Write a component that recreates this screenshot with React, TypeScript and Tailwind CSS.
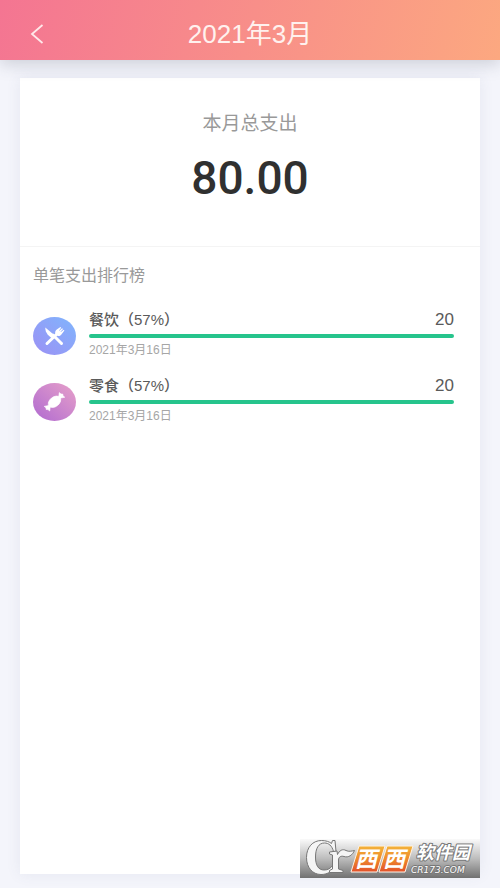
import React from 'react';

interface Expense {
  name: string;
  percent: number;
  date: string;
  amount: number;
  kind: 'food' | 'snack';
}

const EXPENSES: Expense[] = [
  { name: '餐饮', percent: 57, date: '2021年3月16日', amount: 20, kind: 'food' },
  { name: '零食', percent: 57, date: '2021年3月16日', amount: 20, kind: 'snack' },
];

const FoodIcon: React.FC = () => (
  <svg viewBox="0 0 43 38" className="h-full w-full" aria-hidden="true">
    <g stroke="#fff" strokeLinecap="round" fill="none">
      <path d="M20 18 L28.5 26.5" strokeWidth="3" />
      <path d="M14 26.5 L24.5 16.5" strokeWidth="3" />
    </g>
    {/* knife blade */}
    <path d="M12.3 10.5 L23 19.6 L20.6 22 C16 20 12 15.5 12.3 10.5 Z" fill="#fff" />
    {/* fork head */}
    <path
      d="M22.3 16.8 C21.8 14.5 22.6 13.2 23.8 12.4 L27.4 10 L28.2 10.8 L26 13.4 L26.4 13.8 L29.1 11.2 L30 12 L27.5 14.7 L27.9 15.1 L30.8 12.8 L31.4 13.6 L28.4 17.4 C27 18.9 25.6 19.5 24 18.6 Z"
      fill="#fff"
    />
  </svg>
);

const SnackIcon: React.FC = () => (
  <svg viewBox="0 0 43 38" className="h-full w-full" aria-hidden="true">
    <g fill="#fff" stroke="#fff" strokeWidth="0.6" strokeLinejoin="round">
      <ellipse cx="21.5" cy="18.8" rx="7" ry="4.8" transform="rotate(-38 21.5 18.8)" />
      <path d="M25.5 15.6 L26.3 9.6 L28 11 L29.8 11.1 L30 12.8 L31.8 14.2 Z" />
      <path d="M17.5 22 L16.7 28 L15 26.6 L13.2 26.5 L13 24.8 L11.2 23.4 Z" />
    </g>
  </svg>
);

const ExpenseRow: React.FC<{ item: Expense }> = ({ item }) => (
  <li className="flex items-center">
    <div className="flex h-[50px] shrink-0 items-end pb-[3px]">
      <div
        className={`h-[38px] w-[43px] rounded-[50%] bg-gradient-to-tr ${
          item.kind === 'food' ? 'from-[#9b90f4] to-[#7eb5fd]' : 'from-[#b069d0] to-[#e8a0c8]'
        }`}
      >
        {item.kind === 'food' ? <FoodIcon /> : <SnackIcon />}
      </div>
    </div>
    <div className="ml-[13px] flex-1">
      <div className="flex items-center justify-between text-[#5a5a5a]">
        <span className="text-[15px] leading-6 font-medium">
          {item.name}（{item.percent}%）
        </span>
        <span className="text-[17px] leading-6">{item.amount}</span>
      </div>
      <div className="mt-0.5 h-1 rounded-full bg-[#26c48c]" />
      <div className="mt-1 text-xs leading-4 text-[#a6a6a6]">{item.date}</div>
    </div>
  </li>
);

const SiteBadge: React.FC = () => (
  <svg
    viewBox="0 0 180 39"
    className="absolute right-5 bottom-[10px] h-[39px] w-[180px]"
    role="img"
    aria-label="西西软件园 CR173.COM"
  >
    <defs>
      <linearGradient id="plate" x1="0" y1="0" x2="0" y2="1">
        <stop offset="0" stopColor="#fafafa" />
        <stop offset="0.5" stopColor="#bdbdbd" />
        <stop offset="1" stopColor="#717171" />
      </linearGradient>
      <linearGradient id="tile" x1="0" y1="0" x2="0" y2="1">
        <stop offset="0" stopColor="#f3b33a" />
        <stop offset="0.5" stopColor="#ee8a2c" />
        <stop offset="1" stopColor="#e2502a" />
      </linearGradient>
    </defs>
    <rect width="180" height="39" fill="url(#plate)" />

    {/* Cr mark with a leaf for the arm of the r */}
    <g stroke="#777" strokeWidth="1" fill="#f5f5f5" strokeLinejoin="round">
      <path d="M35 1.5 L36 12.5 L33.5 12.5 C32 6.5 28.5 4 24.5 4 C18.5 4 15.5 9.5 15.5 18 C15.5 26.5 18.5 31 24 31 C28 31 30.5 29.5 33 26 L34.5 28 C31.5 33 27 35.5 21 35.5 C12.5 35.5 6.5 28.5 6.5 18.5 C6.5 8.5 12.5 1.5 21.5 1.5 C26 1.5 29.5 2.8 31.5 4.5 L32.5 1.5 Z" />
      <path d="M29.5 13 L37 12 L37.5 15.5 C39.5 11.5 42.5 9.5 46 11.5 C49 13 51.5 12 54.5 11.5 C52.5 16 48.5 19 44 17.5 C41 16.5 38.5 18 38.5 21 L38.5 30 L43 31.5 L43 33.5 L29.5 33.5 L29.5 31.5 L32.5 30 L32.5 16 L29.5 15 Z" />
    </g>

    <g fill="url(#tile)" stroke="#fff3e6" strokeWidth="1" strokeLinejoin="round">
      <path d="M59 7 L85 7 L77 33 L51 33 Z" />
      <path d="M87 7 L113 7 L105 33 L79 33 Z" />
    </g>
    <g
      fill="#fff"
      fontSize="22"
      fontWeight="700"
      fontStyle="italic"
      className="font-['Noto_Sans_CJK_SC',sans-serif]"
    >
      <text x="55" y="28">西</text>
      <text x="83" y="28">西</text>
    </g>
    <g fill="#fff" stroke="#777" strokeWidth="2" strokeLinejoin="round" paintOrder="stroke" fontStyle="italic">
      <text x="116" y="20" fontSize="18" fontWeight="700" className="font-['Noto_Sans_CJK_SC',sans-serif]">
        软件园
      </text>
      <text x="111" y="34" fontSize="9" className="font-['DejaVu_Sans',sans-serif]">
        CR173.COM
      </text>
    </g>
  </svg>
);

export default function App() {
  return (
    <div className="relative flex min-h-screen flex-col bg-[#f4f5fb] font-['Liberation_Sans','Noto_Sans_CJK_SC',sans-serif]">
      <header className="relative flex h-[60px] items-center justify-center bg-[linear-gradient(105deg,#f47592,#fca880)] pt-2 shadow-[0_4px_16px_rgba(60,70,90,0.22)]">
        <button type="button" aria-label="返回" className="absolute top-6 left-[30px] text-[#ffe9ea]">
          <svg viewBox="0 0 14 20" className="h-5 w-[14px]" fill="none" stroke="currentColor" strokeWidth="1.8">
            <path d="M12.5 1 L2 10 L12.5 19" />
          </svg>
        </button>
        <h1 className="text-[26px] leading-8 text-[#fff1ee]">2021年3月</h1>
      </header>

      <main className="mx-5 mt-[18px] mb-[14px] flex-1 bg-white shadow-[0_0_14px_rgba(80,90,130,0.09)]">
        <section className="flex h-[169px] flex-col items-center border-b border-[#f4f4f4] pt-8">
          <h2 className="text-[19px] leading-7 text-[#999]">本月总支出</h2>
          <p className="mt-3 font-['Roboto',sans-serif] text-[46px] leading-[56px] font-medium text-[#303030]">
            80.00
          </p>
        </section>

        <section className="pr-[26px] pl-[13px]">
          <h2 className="pt-[17px] text-base leading-6 text-[#999]">单笔支出排行榜</h2>
          <ul className="mt-5 space-y-4">
            {EXPENSES.map((item) => (
              <ExpenseRow key={item.name} item={item} />
            ))}
          </ul>
        </section>
      </main>

      <SiteBadge />
    </div>
  );
}
